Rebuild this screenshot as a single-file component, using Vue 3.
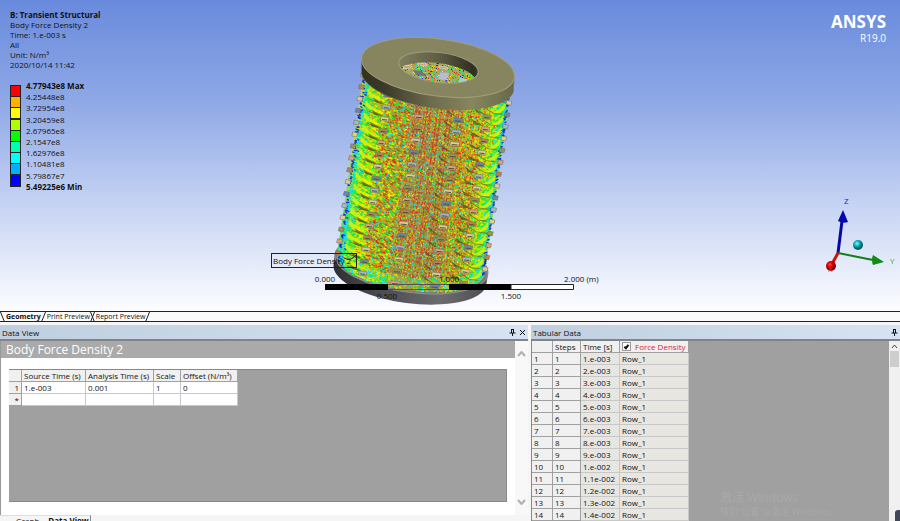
<script setup>
import { ref } from 'vue'

const legend = [
  { color: '#ff0000', label: '4.77943e8 Max' },
  { color: '#ffb000', label: '4.25448e8' },
  { color: '#ffff00', label: '3.72954e8' },
  { color: '#b0ff00', label: '3.20459e8' },
  { color: '#00ff00', label: '2.67965e8' },
  { color: '#00ffb0', label: '2.1547e8' },
  { color: '#00ffff', label: '1.62976e8' },
  { color: '#00b0ff', label: '1.10481e8' },
  { color: '#0000ff', label: '5.79867e7' },
  { color: '', label: '5.49225e6 Min' }
]

const rows = Array.from({ length: 14 }, (_, i) => ({
  step: i + 1,
  time: i < 9 ? `${i + 1}.e-003` : i === 9 ? '1.e-002' : `1.${i - 9}e-002`
}))

const showForce = ref(true)

// Seeded generator, so the vector plot is the same on every load
let seed = 20201014
const rand = () => {
  seed = (seed * 1664525 + 1013904223) % 4294967296
  return seed / 4294967296
}

// Point on the front of the tilted cylinder: u across (-1..1), v down (0..1)
const surface = (u, v) => {
  const front = Math.sqrt(Math.max(0, 1 - u * u))
  return [438 + 74 * u - 27 * v, 74 + 8 * u + 27 * front + 190 * v]
}

const palette = {
  red: '#f01c10', orange: '#f08010', yellow: '#f4f000', lime: '#a0f000', green: '#18e838',
  mint: '#00e8b0', cyan: '#10dcf0', blue: '#1828e0', brown: '#8a7038', dark: '#3c3c28'
}

const pick = (weights) => {
  let r = rand() * weights.reduce((s, w) => s + w[1], 0)
  for (const [name, w] of weights) {
    r -= w
    if (r <= 0) return name
  }
  return weights[0][0]
}

const zone = (u, v) => {
  const a = Math.abs(u)
  if (a > 0.98) return [['blue', 8], ['cyan', 2]]
  if (a > 0.93) return [['cyan', 5], ['mint', 4], ['green', 3], ['blue', 1]]
  if (a > 0.85) return [['green', 5], ['lime', 3], ['yellow', 2], ['cyan', 2]]
  if (v > 0.93) return [['yellow', 5], ['lime', 4], ['green', 3], ['cyan', 4], ['orange', 1]]
  if (a > 0.68) return [['yellow', 5], ['lime', 4], ['green', 3], ['orange', 1], ['red', 1]]
  if (a > 0.36) return [['red', 5], ['orange', 4], ['yellow', 3], ['lime', 2], ['green', 3], ['brown', 2], ['cyan', 1]]
  return [['red', 6], ['brown', 4], ['yellow', 3], ['lime', 3], ['green', 2], ['cyan', 2], ['orange', 2]]
}

const strokes = Object.fromEntries(Object.keys(palette).map((k) => [k, '']))
for (let i = 0; i < 14000; i++) {
  const u = (rand() - 0.5) * 2
  const v = rand()
  const name = pick(zone(u, v))
  const [x, y] = surface(u, v)
  const a = Math.abs(u)
  const dx = a < 0.35 ? 1 : u < 0 ? 2 : a > 0.8 ? -2 : 1
  strokes[name] += `M${x.toFixed(1)} ${y.toFixed(1)}l${dx} ${a < 0.35 ? 0 : 1}`
}

// Vertical rows of arrows along the middle of the coil
let redColumns = ''
let cyanColumns = ''
for (let c = 0; c < 15; c++) {
  const u = -0.32 + c * 0.048
  const [x1, y1] = surface(u, 0.01)
  const [x2, y2] = surface(u, 0.9)
  const line = `M${x1.toFixed(1)} ${y1.toFixed(1)}L${x2.toFixed(1)} ${y2.toFixed(1)}`
  if (c % 3 === 0) cyanColumns += line
  else redColumns += line
}

// Coil turns: slanted bands of vectors and the block at each support column
const tones = ['#d7a27c', '#d9d28c', '#6787ad', '#b9814f', '#98925a', '#9eb9cf', '#d9cb9e']
let shadows = ''
let bright = ''
let green = ''
let gaps = ''
const blocks = []
const columns = [-0.995, -0.66, -0.22, 0.31, 0.7, 0.995]
for (let r = 0; r < 16; r++) {
  const v = 0.025 + r * 0.0625
  columns.forEach((u, c) => {
    const [x, y] = surface(u, v)
    const edge = c === 0 || c === 5
    const w = edge ? 5 : c === 2 || c === 3 ? 9 : 8
    const h = 4
    blocks.push({
      d: `M${(x - w / 2).toFixed(1)} ${(y - 1).toFixed(1)}l${w} 1l-1 ${h}l-${w} -1z`,
      slot: edge ? '' : `M${(x - w / 2 + 1).toFixed(1)} ${(y + 2).toFixed(1)}l${w - 3} 0.5`,
      fill: tones[(r * 3 + c * 2) % tones.length]
    })
    if (!edge && c !== 2) shadows += `M${(x - 1).toFixed(1)} ${(y - 1).toFixed(1)}l-13 ${c === 3 ? -10 : -7}l3 5z`
  })
  const [lx, ly] = surface(-0.93, v - 0.02)
  const [rx, ry] = surface(0.93, v - 0.02)
  const L = `${lx.toFixed(1)} `
  const R = `${rx.toFixed(1)} `
  green += `M${L}${(ly - 4).toFixed(1)}q1 10 9 13M${R}${(ry - 5).toFixed(1)}q-1 9 -8 12`
  bright += `M${L}${ly.toFixed(1)}q5 8 17 12M${L}${(ly + 3).toFixed(1)}q5 6 13 9`
  bright += `M${R}${ry.toFixed(1)}q-3 6 -12 9M${R}${(ry + 3).toFixed(1)}q-4 5 -10 6`
  gaps += `M${(lx + 3).toFixed(1)} ${(ly + 10).toFixed(1)}l12 5M${(rx - 3).toFixed(1)} ${(ry + 10).toFixed(1)}l-9 -1l-9 -6`
}

// Vectors seen through the bore of the upper plate
const bore = Array.from({ length: 750 }, () => ({
  x: Math.round(398 + rand() * 82),
  y: Math.round(60 + rand() * 25),
  c: Object.values(palette)[Math.floor(rand() * 9)]
}))
</script>

<template>
  <div class="app">
    <section class="viewport">
      <div class="info">
        <strong>B: Transient Structural</strong>
        <span>Body Force Density 2</span>
        <span>Time: 1.e-003 s</span>
        <span>All</span>
        <span>Unit: N/m³</span>
        <span>2020/10/14 11:42</span>
        <ul class="legend">
          <li v-for="l in legend" :key="l.label">
            <i v-if="l.color" class="swatch" :style="{ background: l.color }"></i>
            <span>{{ l.label }}</span>
          </li>
        </ul>
      </div>

      <svg class="scene" viewBox="0 0 900 311" preserveAspectRatio="xMidYMid meet">
        <defs>
          <linearGradient id="rim" x1="0" x2="1">
            <stop offset="0" stop-color="#33321f" />
            <stop offset=".14" stop-color="#39382a" />
            <stop offset=".45" stop-color="#6b6a4b" />
            <stop offset=".72" stop-color="#87865f" />
            <stop offset="1" stop-color="#68674a" />
          </linearGradient>
          <linearGradient id="inner" x1="0" x2="1">
            <stop offset="0" stop-color="#828160" />
            <stop offset=".5" stop-color="#5e5d43" />
            <stop offset=".9" stop-color="#302f20" />
            <stop offset="1" stop-color="#4a4935" />
          </linearGradient>
          <linearGradient id="base" x1="0" x2="1">
            <stop offset="0" stop-color="#303034" />
            <stop offset=".25" stop-color="#47474b" />
            <stop offset=".7" stop-color="#6b6b70" />
            <stop offset="1" stop-color="#4c4c50" />
          </linearGradient>
          <linearGradient id="coil" x1="0" x2="1">
            <stop offset="0" stop-color="#40d890" />
            <stop offset=".12" stop-color="#c8e020" />
            <stop offset=".3" stop-color="#b8a030" />
            <stop offset=".5" stop-color="#a08c50" />
            <stop offset=".7" stop-color="#b8a030" />
            <stop offset=".88" stop-color="#c8e020" />
            <stop offset="1" stop-color="#40d890" />
          </linearGradient>
          <clipPath id="hole">
            <ellipse cx="438.500" cy="67.500" rx="40" ry="15" transform="rotate(7.400 438.500 67.500)" />
          </clipPath>
          <clipPath id="floor">
            <ellipse cx="437" cy="78" rx="40" ry="15" transform="rotate(7.400 437 78)" />
          </clipPath>
          <radialGradient id="ballRed" cx=".4" cy=".35"><stop offset="0" stop-color="#ff5040" /><stop offset=".5" stop-color="#e00000" /><stop offset="1" stop-color="#800000" /></radialGradient>
          <radialGradient id="ballCyan" cx=".4" cy=".35"><stop offset="0" stop-color="#80ffff" /><stop offset=".5" stop-color="#10b8c0" /><stop offset="1" stop-color="#046068" /></radialGradient>
        </defs>

        <path d="M335 253L333.500 266A77 28.600 7.400 0 0 486 286L488 274Z" fill="url(#base)" />
        <ellipse cx="411.500" cy="264" rx="77" ry="28.600" transform="rotate(7.400 411.500 264)" fill="#77787e" stroke="#8f8f96" />
        <path d="M364 70L337 254A74 27 7.400 0 0 485 273L511 86Z" fill="url(#coil)" />
        <g fill="none" stroke-width="1.200">
          <path v-for="(d, name) in strokes" :key="name" :d="d" :stroke="palette[name]" />
        </g>
        <g fill="none">
          <path :d="redColumns" stroke="#e02418" stroke-dasharray="3 2" opacity=".7" />
          <path :d="cyanColumns" stroke="#50d8c0" stroke-dasharray="2 2" opacity=".8" />
          <path :d="green" stroke="#20e860" stroke-width="2" opacity=".7" />
          <path :d="bright" stroke="#f0f400" stroke-width="2" opacity=".75" />
          <path :d="gaps" stroke="#6e6a20" opacity=".75" />
        </g>
        <path :d="shadows" fill="#48452c" opacity=".65" />
        <g>
          <template v-for="(b, i) in blocks" :key="i">
            <path :d="b.d" :fill="b.fill" stroke="#6b6750" stroke-width=".5" />
            <path v-if="b.slot" :d="b.slot" stroke="#55513a" />
          </template>
        </g>

        <path d="M361.500 60L361.500 74A77 28.600 7.400 0 0 513 93L514.300 78Z" fill="url(#rim)" stroke="#77765a" stroke-width=".5" />
        <ellipse cx="438" cy="67.500" rx="77" ry="28.600" transform="rotate(7.400 438 67.500)" fill="#86855f" stroke="#a09f78" />
        <g clip-path="url(#hole)">
          <rect x="396" y="48" width="86" height="40" fill="url(#inner)" />
          <g clip-path="url(#floor)">
            <rect x="396" y="48" width="86" height="50" fill="#a4a868" />
            <rect v-for="(b, i) in bore" :key="i" :x="b.x" :y="b.y" width="1" height="1" :fill="b.c" />
            <path d="M404 65l8 1-3 3-6-1zM418 63l9 1v2l-9-1zM439 66l9 1v2l-9-1z" fill="#c8a27a" stroke="#eee" stroke-width=".5" />
            <path d="M413 70l9 1 4 5-10-1z" fill="#74727a" />
            <path d="M440 72l9 1-2 7-9-1z" fill="#b9bbce" />
            <path d="M460 78l8 1-2 3-9 1z" fill="#98d6cf" />
          </g>
        </g>
        <ellipse cx="438.500" cy="67.500" rx="40" ry="15" transform="rotate(7.400 438.500 67.500)" fill="none" stroke="#a09f78" />

        <g class="scene-text">
          <rect x="271.500" y="253.500" width="85" height="14" fill="none" stroke="#222" />
          <path d="M357 254q-6 8-13 4" fill="none" stroke="#222" />
          <text x="273" y="264">Body Force Density 2</text>
          <path d="M325 284h63v6h-63zM449 284h62v6h-62z" fill="#000" />
          <path d="M511 284.500h62.500v5h-62.500z" fill="#fff" stroke="#222" />
          <path d="M388 284.500h61M388 289.500h61" stroke="#555" />
          <text x="325" y="282" text-anchor="middle">0.000</text>
          <text x="387" y="299" text-anchor="middle">0.500</text>
          <text x="449" y="282" text-anchor="middle">1.000</text>
          <text x="511" y="299" text-anchor="middle">1.500</text>
          <text x="564" y="282">2.000 (m)</text>
        </g>

        <g>
          <path d="M838 253L842 221" stroke="#0808a0" stroke-width="3" />
          <path d="M843 210l5 12q-5 2-10-1z" fill="#0606b0" />
          <path d="M838 253L873 260" stroke="#128012" stroke-width="2" />
          <path d="M884 262l-11 3q-2-5 0-10z" fill="#108c14" />
          <path d="M838 253l-6 11" stroke="#d01010" stroke-width="3" />
          <circle cx="831" cy="266" r="5" fill="url(#ballRed)" />
          <circle cx="858" cy="245" r="5" fill="url(#ballCyan)" />
          <text class="axis" x="844" y="204" fill="#2020ff">Z</text>
          <text class="axis" x="890" y="264" fill="#20b020">Y</text>
          <text class="axis" x="828" y="272" fill="#ff2020">X</text>
        </g>
      </svg>

      <div class="brand">
        <strong>ANSYS</strong>
        <span>R19.0</span>
      </div>
    </section>

    <nav class="view-tabs">
      <svg viewBox="0 0 5 10"><path d="M0.500 0L4.500 10" /></svg>
      <button class="current">Geometry</button>
      <svg viewBox="0 0 5 10"><path d="M4.500 0L0.500 10" /></svg>
      <button>Print Preview</button>
      <svg viewBox="0 0 5 10"><path d="M0.500 0L4.500 10M4.500 0L0.500 10" /></svg>
      <button>Report Preview</button>
      <svg viewBox="0 0 5 10"><path d="M4.500 0L0.500 10" /></svg>
    </nav>

    <main class="panels">
      <section class="panel">
        <header class="panel-head">
          <h2>Data View</h2>
          <button aria-label="Pin Data View"><svg viewBox="0 0 7 7"><path d="M2 0.500h3M2.500 0v4M4.500 0v4M0.500 4h6M3.500 4v3" /></svg></button>
          <button aria-label="Close Data View"><svg viewBox="0 0 7 7"><path d="M1 1l5 5M6 1l-5 5" /></svg></button>
        </header>
        <div class="data-body">
          <div class="data-content">
            <h1>Body Force Density 2</h1>
            <div class="sheet">
              <table class="source">
                <thead>
                  <tr><th class="c-n"></th><th class="c-s">Source Time (s)</th><th class="c-a">Analysis Time (s)</th><th class="c-k">Scale</th><th class="c-o">Offset (N/m³)</th></tr>
                </thead>
                <tbody>
                  <tr><th>1</th><td>1.e-003</td><td>0.001</td><td>1</td><td>0</td></tr>
                  <tr><th>*</th><td></td><td></td><td></td><td></td></tr>
                </tbody>
              </table>
            </div>
          </div>
          <div class="scroll pale">
            <svg viewBox="0 0 9 6"><path d="M1 5l3.500-4L8 5" /></svg>
            <svg viewBox="0 0 9 6"><path d="M1 1l3.500 4L8 1" /></svg>
          </div>
        </div>
        <nav class="sheet-tabs">
          <button>Graph</button>
          <button class="current">Data View</button>
        </nav>
      </section>

      <section class="panel">
        <header class="panel-head">
          <h2>Tabular Data</h2>
          <button aria-label="Pin Tabular Data"><svg viewBox="0 0 7 7"><path d="M2 0.500h3M2.500 0v4M4.500 0v4M0.500 4h6M3.500 4v3" /></svg></button>
        </header>
        <div class="tab-body">
          <div class="tab-canvas">
            <table class="tabular">
              <thead>
                <tr>
                  <th class="t-n"></th><th class="t-s">Steps</th><th class="t-t">Time [s]</th>
                  <th class="t-f"><label><input v-model="showForce" type="checkbox" />Force Density</label></th>
                </tr>
              </thead>
              <tbody>
                <tr v-for="r in rows" :key="r.step">
                  <th>{{ r.step }}</th><th>{{ r.step }}</th><td>{{ r.time }}</td><td>Row_1</td>
                </tr>
              </tbody>
            </table>
            <p class="watermark"><b>激活 Windows</b><span>转到“设置”以激活 Windows。</span></p>
          </div>
          <div class="scroll">
            <svg viewBox="0 0 9 6"><path d="M2 5l2.500-3L7 5" /></svg>
            <i class="thumb"></i>
            <i class="grip"></i>
          </div>
        </div>
      </section>
    </main>
  </div>
</template>

<style>
body {
  overflow: hidden;
}
</style>

<style scoped>
.app {
  display: grid;
  grid-template-rows: minmax(0, 311fr) auto minmax(0, 199fr);
  height: 100vh;
  overflow: hidden;
  background: #f5f5f5;
  color: #111;
  font-family: "Open Sans", "Noto Sans CJK SC", sans-serif;
  font-size: 8px;
}
button {
  padding: 0;
  border: 0;
  background: none;
  color: inherit;
  font: inherit;
  white-space: nowrap;
}
.viewport {
  position: relative;
  display: flex;
  justify-content: space-between;
  padding: 10px 14px 0 10px;
  background: linear-gradient(#698adc, #8ea8e6 32%, #c4d2f3 65%, #fdfdff);
}
.scene {
  position: absolute;
  inset: 0;
  width: 100%;
  height: 100%;
}
.scene-text text {
  font-size: 8px;
  fill: #111;
}
.axis {
  font-size: 8px;
}
.info {
  display: flex;
  flex-direction: column;
  line-height: 10px;
}
.legend {
  display: flex;
  flex-direction: column;
  height: 112px;
  margin: 11px 0 0;
  padding: 0;
  list-style: none;
}
.legend li {
  display: flex;
  flex: 1;
  align-items: flex-start;
  min-height: 0;
  padding-left: 16px;
}
.legend .swatch {
  box-sizing: border-box;
  width: 11px;
  height: 12px;
  margin: 4px 5px 0 -16px;
  border: 1px solid #222;
  flex: none;
}
.legend li:first-child,
.legend li:last-child {
  font-weight: 700;
}
.brand {
  display: flex;
  flex-direction: column;
  align-items: flex-end;
  color: #fff;
  font-size: 10px;
  line-height: 12px;
}
.brand strong {
  margin-top: 2px;
  font-family: "Noto Sans", sans-serif;
  font-size: 17px;
  line-height: 20px;
}
.view-tabs {
  display: flex;
  height: 9px;
  border: solid #222;
  border-width: 1px 0;
  background: #fafafa;
  font-size: 7px;
  line-height: 9px;
}
.view-tabs svg {
  width: 5px;
  height: 10px;
  margin-right: 1px;
  stroke: #222;
  fill: none;
}
.current {
  font-weight: 700;
}
.panels {
  display: grid;
  grid-template-columns: 528fr 369fr;
  gap: 3px;
  min-height: 0;
  padding-top: 3px;
}
.panel {
  display: flex;
  flex-direction: column;
  min-width: 0;
  min-height: 0;
}
.panel-head {
  display: flex;
  align-items: center;
  flex: none;
  gap: 2px;
  height: 14px;
  padding: 0 2px;
  border-bottom: 2px solid #808488;
  background: linear-gradient(90deg, #c0cfdf, #d5e3f2);
}
.panel-head h2 {
  flex: 1;
  margin: 0;
  font-size: 8px;
  font-weight: 400;
}
.panel-head button {
  display: flex;
}
.panel-head svg {
  width: 7px;
  height: 7px;
  stroke: #111;
  fill: none;
}
.panel-head button + button {
  margin-left: 1px;
}
.data-body {
  display: flex;
  flex: 1;
  min-height: 0;
  border-left: 1px solid #999;
  background: #fff;
}
.data-content {
  display: flex;
  flex: 1;
  flex-direction: column;
}
h1 {
  height: 17px;
  margin: 0;
  padding-left: 5px;
  background: #aaa;
  color: #fff;
  font-size: 12px;
  font-weight: 400;
  line-height: 17px;
}
.sheet {
  flex: 1;
  margin: 11px 8px 13px;
  border: solid #888;
  border-width: 1px 1px 1px 0;
  background: #a0a0a0;
}
table {
  border-collapse: separate;
  border-spacing: 0;
  table-layout: fixed;
  white-space: nowrap;
}
th,
td {
  box-sizing: border-box;
  padding: 0 0 0 2px;
  border: solid #c8c8c8;
  border-width: 0 1px 1px 0;
  background: #fff;
  font-weight: 400;
  line-height: 11px;
  text-align: left;
}
th {
  border-color: #a0a0a0;
  background: #f0f0f0;
}
.source {
  width: 229px;
}
.source tr {
  height: 12px;
}
.source tbody th {
  padding: 0 2px;
  text-align: right;
}
.c-n { width: 13px; }
.c-s { width: 64px; }
.c-a { width: 68px; }
.c-k { width: 27px; }
.c-o { width: 57px; }
.scroll {
  display: flex;
  flex: none;
  flex-direction: column;
  align-items: center;
  width: 11px;
  background: #f0f0f0;
}
.scroll svg {
  width: 9px;
  height: 6px;
  margin: 2px 0;
  fill: none;
  stroke: #444;
}
.pale {
  justify-content: space-between;
  width: 13px;
  padding: 8px 0;
  background: #f8f8f8;
}
.pale svg {
  stroke: #b0b0b0;
  stroke-width: 2;
}
.thumb {
  width: 9px;
  height: 16px;
  background: #cdcdcd;
}
.grip {
  align-self: flex-end;
  width: 5px;
  height: 11px;
  margin-top: auto;
  border-radius: 3px 0 0 0;
  background: #41465a;
}
.sheet-tabs {
  display: flex;
  gap: 9px;
  flex: none;
  height: 5px;
  width: 74px;
  padding-left: 16px;
  overflow: hidden;
  border-top: 1px solid #ddd;
  border-right: 1px solid #888;
  line-height: 10px;
}
.sheet-tabs button {
  height: 10px;
}
.tab-body {
  display: flex;
  flex: 1;
  min-height: 0;
  border-left: 1px solid #888;
}
.tab-canvas {
  position: relative;
  flex: 1;
  overflow: hidden;
  background: #a0a0a0;
}
.tabular {
  width: 157px;
}
.tabular tr {
  height: 12px;
}
.tabular td {
  background: #e8e6e1;
}
.t-n { width: 21px; }
.t-s { width: 28px; }
.t-t { width: 39px; }
.t-f { width: 69px; }
.t-f label {
  display: flex;
  align-items: center;
  gap: 4px;
  color: #e02030;
}
.t-f input {
  display: grid;
  place-content: center;
  box-sizing: border-box;
  width: 9px;
  height: 9px;
  margin: 0;
  appearance: none;
  border: 1px solid #999;
  background: #fff;
}
.t-f input:checked::before {
  content: "";
  width: 1px;
  height: 3px;
  border: solid #111;
  border-width: 0 2px 2px 0;
  transform: rotate(40deg);
}
.watermark {
  position: absolute;
  right: 50px;
  bottom: 2px;
  display: flex;
  flex-direction: column;
  margin: 0;
  color: #a8a8a8;
  font-size: 9px;
  line-height: 14px;
}
.watermark b {
  font-size: 12px;
  font-weight: 400;
}
</style>
